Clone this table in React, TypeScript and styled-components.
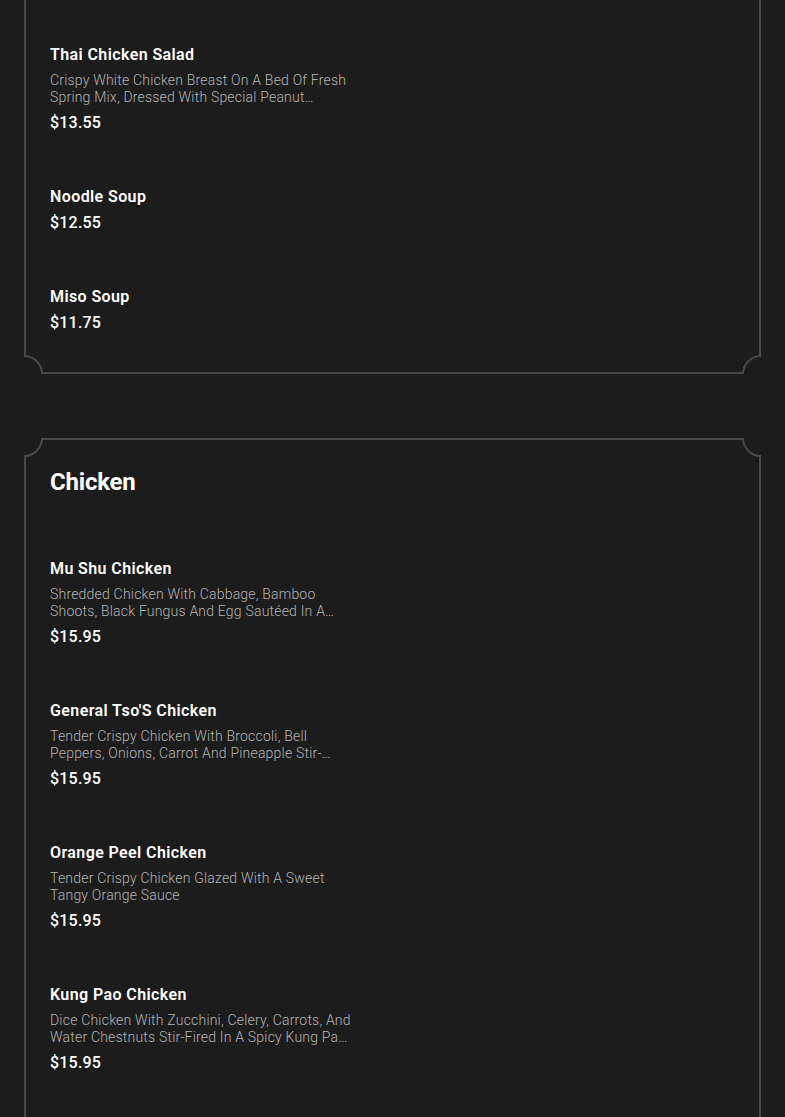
import React from "react";
import styled, { createGlobalStyle } from "styled-components";

const GlobalStyle = createGlobalStyle`
  html, body {
    margin: 0;
    padding: 0;
    background: #1c1c1c;
    font-family: Roboto, "Liberation Sans", sans-serif;
    color: #ffffff;
  }
`;

const Page = styled.div`
  display: flex;
  flex-direction: column;
  gap: 64px;
  padding: 0 24px 80px;
  margin-top: -218px;
`;

const CardFrame = styled.section`
  position: relative;
  overflow: hidden;
`;

const Card = styled.div`
  border: 2px solid #484848;
  padding: 26px 24px 38px;
`;

const Notch = styled.span<{ $v: "top" | "bottom"; $h: "left" | "right" }>`
  position: absolute;
  width: 38px;
  height: 38px;
  box-sizing: border-box;
  border-radius: 50%;
  border: 2px solid #484848;
  background: #1c1c1c;
  ${(p) => (p.$v === "top" ? "top: -19px;" : "bottom: -19px;")}
  ${(p) => (p.$h === "left" ? "left: -19px;" : "right: -19px;")}
`;

const Heading = styled.h2`
  margin: 0 0 60px;
  font-size: 24px;
  line-height: 32px;
  font-weight: 700;
  letter-spacing: -0.2px;
  color: #ffffff;
`;

const ItemList = styled.div`
  display: flex;
  flex-direction: column;
  gap: 52px;
`;

const Item = styled.div`
  display: flex;
  flex-direction: column;
  max-width: 302px;
`;

const ItemName = styled.div`
  font-size: 16px;
  line-height: 22px;
  font-weight: 600;
  letter-spacing: 0.4px;
  margin-bottom: 4px;
`;

const ItemDesc = styled.p`
  margin: 2px 0 6px;
  height: 34px;
  font-size: 14px;
  line-height: 17px;
  font-weight: 300;
  letter-spacing: 0.2px;
  color: #b4b4b4;
  display: -webkit-box;
  -webkit-line-clamp: 2;
  -webkit-box-orient: vertical;
  overflow: hidden;
`;

const Price = styled.div`
  font-size: 16px;
  line-height: 22px;
  font-weight: 500;
  letter-spacing: 0.2px;
`;

type MenuItem = { name: string; desc?: string; price: string };

const soups: MenuItem[] = [
  {
    name: "Hot And Sour Soup",
    desc: "Tofu, Bamboo Shoots, Mushrooms And Egg In A Tangy Spicy Broth",
    price: "$11.75",
  },
  {
    name: "Thai Chicken Salad",
    desc: "Crispy White Chicken Breast On A Bed Of Fresh Spring Mix, Dressed With Special Peanut Dressing",
    price: "$13.55",
  },
  { name: "Noodle Soup", price: "$12.55" },
  { name: "Miso Soup", price: "$11.75" },
];

const chicken: MenuItem[] = [
  {
    name: "Mu Shu Chicken",
    desc: "Shredded Chicken With Cabbage, Bamboo Shoots, Black Fungus And Egg Sautéed In A Light Sauce",
    price: "$15.95",
  },
  {
    name: "General Tso'S Chicken",
    desc: "Tender Crispy Chicken With Broccoli, Bell Peppers, Onions, Carrot And Pineapple Stir-Fried In A Sweet Sauce",
    price: "$15.95",
  },
  {
    name: "Orange Peel Chicken",
    desc: "Tender Crispy Chicken Glazed With A Sweet Tangy Orange Sauce",
    price: "$15.95",
  },
  {
    name: "Kung Pao Chicken",
    desc: "Dice Chicken With Zucchini, Celery, Carrots, And Water Chestnuts Stir-Fired In A Spicy Kung Pao Sauce",
    price: "$15.95",
  },
  {
    name: "Sesame Chicken",
    desc: "Crispy Chicken Tossed In A Sweet Sesame Glaze",
    price: "$15.95",
  },
];

const MenuCard = ({ title, items }: { title: string; items: MenuItem[] }) => (
  <CardFrame>
    <Card>
      <Heading>{title}</Heading>
      <ItemList>
        {items.map((item) => (
          <Item key={item.name}>
            <ItemName>{item.name}</ItemName>
            {item.desc && <ItemDesc>{item.desc}</ItemDesc>}
            <Price>{item.price}</Price>
          </Item>
        ))}
      </ItemList>
    </Card>
    <Notch $v="top" $h="left" />
    <Notch $v="top" $h="right" />
    <Notch $v="bottom" $h="left" />
    <Notch $v="bottom" $h="right" />
  </CardFrame>
);

const App = () => {
  return (
    <>
      <GlobalStyle />
      <Page>
        <MenuCard title="Soup & Salad" items={soups} />
        <MenuCard title="Chicken" items={chicken} />
      </Page>
    </>
  );
};

export default App;
